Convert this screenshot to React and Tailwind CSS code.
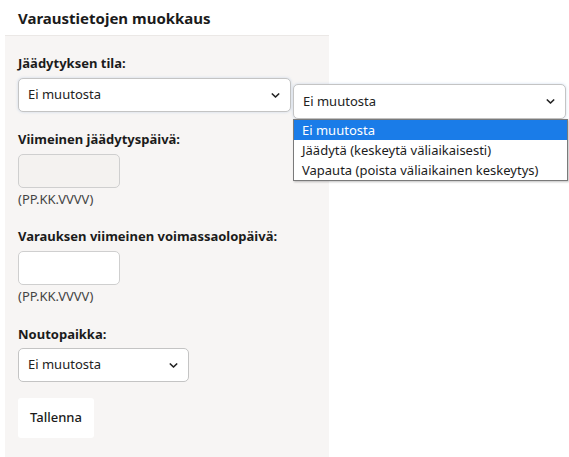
import { useState } from "react";

function Chevron() {
  return (
    <svg viewBox="0 0 10 6" className="h-[5px] w-[9px]" aria-hidden="true">
      <path d="M1.2 1.2l3.8 3.6 3.8-3.6" fill="none" stroke="#222" strokeWidth="2" strokeLinecap="round" strokeLinejoin="round" />
    </svg>
  );
}

function SelectBox({ value, className = "" }) {
  return (
    <div
      className={`flex items-center justify-between rounded-[5px] border border-[#c4c4c4] bg-white pl-[9px] pr-[10px] text-[13px] text-[#222] ${className}`}
    >
      <span>{value}</span>
      <Chevron />
    </div>
  );
}

function DateField({ disabled }) {
  return (
    <div
      className={`h-[34px] w-[102px] rounded-[5px] border border-[#cfcfcf] ${disabled ? "bg-[#f4f2f0]" : "bg-white"}`}
    />
  );
}

const options = [
  "Ei muutosta",
  "Jäädytä (keskeytä väliaikaisesti)",
  "Vapauta (poista väliaikainen keskeytys)",
];

export default function App() {
  const [active] = useState(0);

  return (
    <div className="relative h-[457px] w-[569px] overflow-hidden bg-white font-['Noto_Sans',sans-serif] text-[#1b1b1b]">
      <h2 className="pl-[18px] pt-[8px] text-[15px] font-bold leading-[20px]">Varaustietojen muokkaus</h2>

      <div className="ml-[5px] mt-[7px] h-[430px] w-[324px] border-t border-[#ebe8e6] bg-[#f7f5f4] pl-[13px] pt-[18px]">
        <div className="text-[13px] font-bold leading-[18px]">Jäädytyksen tila:</div>
        <SelectBox
          value="Ei muutosta"
          className="mt-[6px] h-[34px] w-[273px] border-[#a9c5e6] shadow-[0_0_3px_rgba(120,160,210,0.35)]"
        />

        <div className="mt-[18px] text-[13px] font-bold leading-[18px]">Viimeinen jäädytyspäivä:</div>
        <div className="mt-[6px]">
          <DateField disabled />
        </div>
        <div className="mt-[2px] text-[13px] leading-[18px] text-[#444]">(PP.KK.VVVV)</div>

        <div className="mt-[19px] text-[13px] font-bold leading-[18px]">Varauksen viimeinen voimassaolopäivä:</div>
        <div className="mt-[6px]">
          <DateField />
        </div>
        <div className="mt-[2px] text-[13px] leading-[18px] text-[#444]">(PP.KK.VVVV)</div>

        <div className="mt-[20px] text-[13px] font-bold leading-[18px]">Noutopaikka:</div>
        <SelectBox value="Ei muutosta" className="mt-[5px] h-[34px] w-[171px]" />

        <button className="mt-[16px] h-[40px] w-[76px] rounded-[3px] bg-white text-[13px] font-medium">
          Tallenna
        </button>
      </div>

      {/* native select popup, open */}
      <div className="absolute left-[293px] top-[84px] w-[275px]">
        <SelectBox
          value="Ei muutosta"
          className="h-[35px] w-[273px] border-[#a9c5e6] shadow-[0_0_3px_rgba(120,160,210,0.35)]"
        />
        <ul className="border border-[#7a7a7a] bg-white text-[13px] leading-[20px] text-[#1b1b1b] shadow-[1px_1px_2px_rgba(0,0,0,0.25)]">
          {options.map((o, i) => (
            <li key={o} className={`pl-[8px] ${i === active ? "bg-[#1a7ce8] text-white" : ""}`}>
              {o}
            </li>
          ))}
        </ul>
      </div>
    </div>
  );
}
